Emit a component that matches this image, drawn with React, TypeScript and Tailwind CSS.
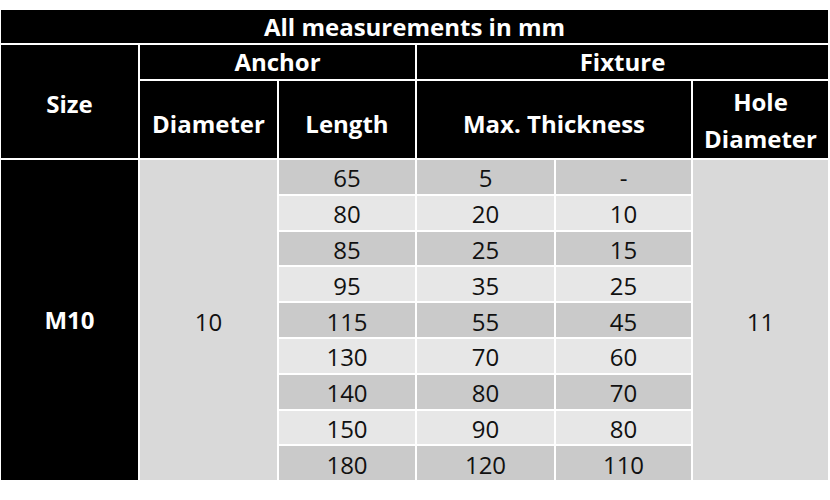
const rows = [
  ["65", "5", "-"],
  ["80", "20", "10"],
  ["85", "25", "15"],
  ["95", "35", "25"],
  ["115", "55", "45"],
  ["130", "70", "60"],
  ["140", "80", "70"],
  ["150", "90", "80"],
  ["180", "120", "110"],
];

const head = "bg-black text-white font-bold flex items-center justify-center";
const cell = "text-[#111] flex items-center justify-center pt-[3px]";

export default function App() {
  return (
    <div
      className="bg-white w-[830px] h-[500px] pt-[10px] pl-px"
      style={{ fontFamily: "'Open Sans', 'Liberation Sans', sans-serif" }}
    >
      <div className="grid grid-cols-[137px_137px_136px_137px_135px_135px] grid-rows-[33px_34px_77px_repeat(9,33.8px)] gap-[2px] text-[24px] leading-none">
        <div className={`${head} col-span-6`}>All measurements in mm</div>
        <div className={`${head} row-span-2 pt-1`}>Size</div>
        <div className={`${head} col-span-2`}>Anchor</div>
        <div className={`${head} col-span-3`}>Fixture</div>
        <div className={`${head} pt-2`}>Diameter</div>
        <div className={`${head} pt-2`}>Length</div>
        <div className={`${head} col-span-2 pt-2`}>Max. Thickness</div>
        <div className={`${head} flex-col leading-[37px]`}>
          <span>Hole</span>
          <span>Diameter</span>
        </div>

        <div className={`${head} row-span-9`}>M10</div>
        <div className={`${cell} row-span-9 bg-[#d9d9d9]`}>10</div>
        {rows.map((r, i) => {
          const bg = i % 2 === 0 ? "bg-[#cacaca]" : "bg-[#e7e7e7]";
          return r.map((v, j) => (
            <div key={`${i}-${j}`} className={`${cell} ${bg}`} style={{ gridColumn: j + 3, gridRow: i + 4 }}>
              {v}
            </div>
          ));
        })}
        <div className={`${cell} bg-[#d9d9d9]`} style={{ gridColumn: 6, gridRow: "4 / span 9" }}>
          11
        </div>
      </div>
    </div>
  );
}
